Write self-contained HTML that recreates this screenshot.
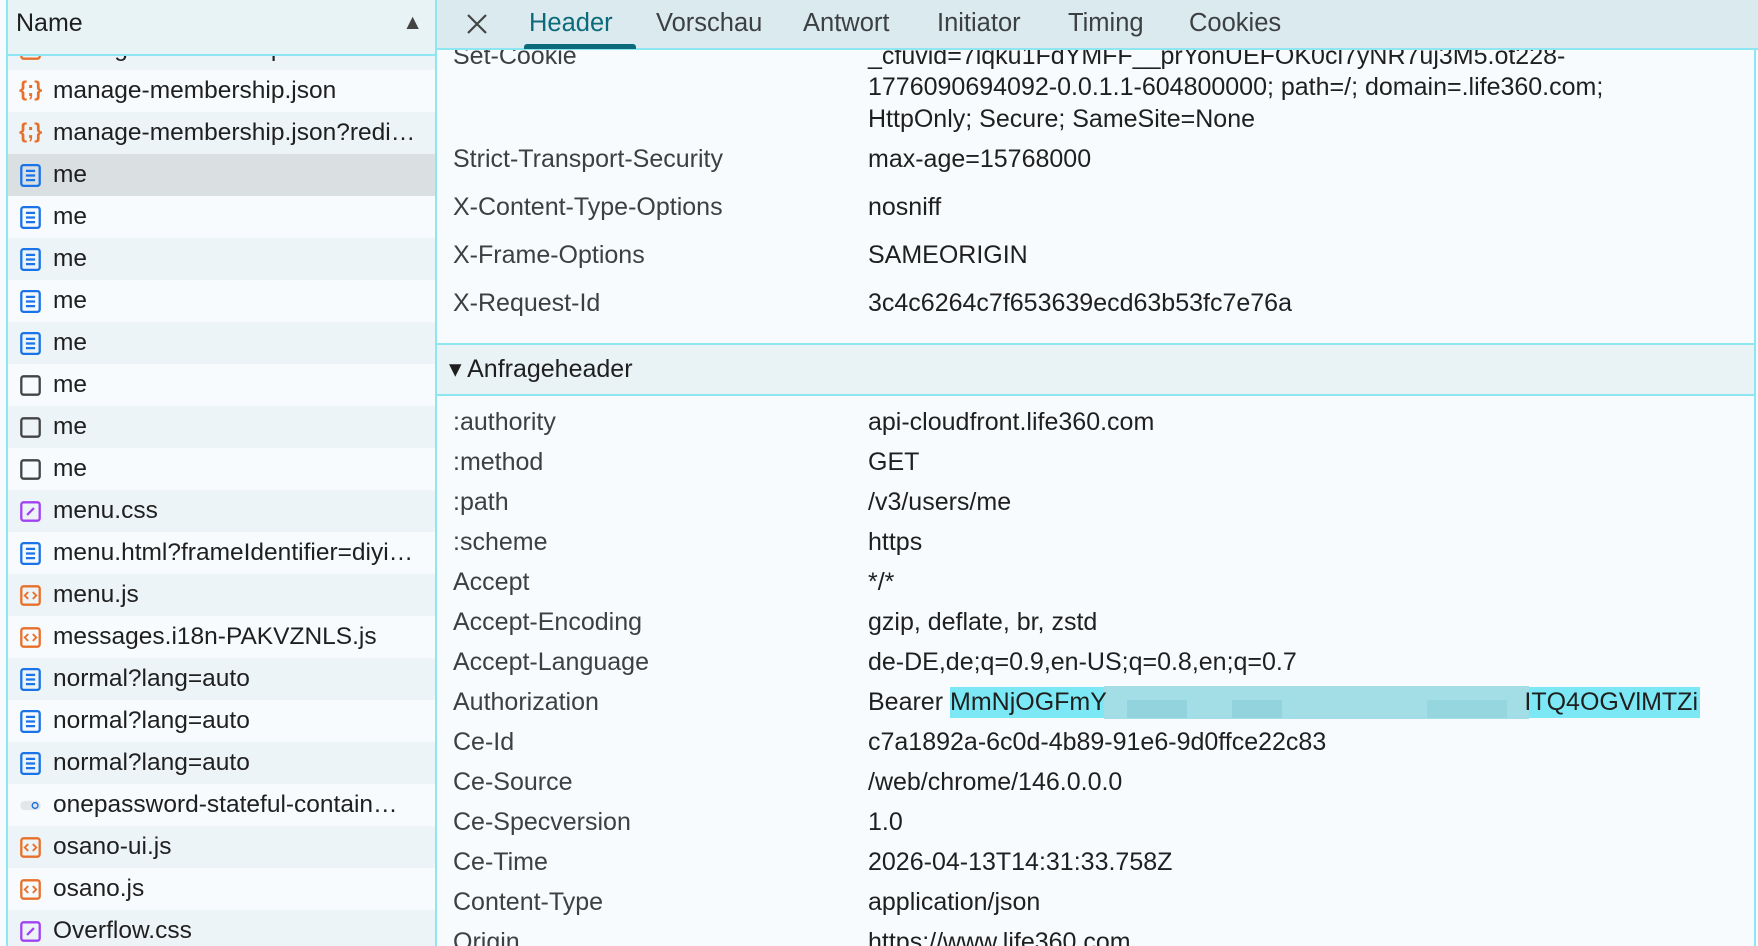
<!DOCTYPE html>
<html><head><meta charset="utf-8"><style>
*{margin:0;padding:0;box-sizing:border-box}
body{width:1758px;height:946px;overflow:hidden;background:#f7fbfd;font-family:"Liberation Sans",sans-serif;position:relative;color:#1f1f1f}
.lp{position:absolute;left:6px;top:0;width:431px;height:946px;border-left:2px solid #8ee6f2;border-right:2px solid #8ee6f2;overflow:hidden;background:#f7fbfd}
.row{position:absolute;left:0;width:100%;height:42px;font-size:24.5px;line-height:42px;padding-left:45px;white-space:nowrap}
.row.d{background:#edf4f7}
.row.sel{background:#dadfe2}
.ic{position:absolute;left:11px;top:10px;width:23px;height:23px}
.lh{position:absolute;left:0;top:0;width:100%;height:56px;background:#e8f3f6;border-bottom:2px solid #8ee6f2;font-size:25px;line-height:46px;padding-left:8px}
.rh{position:absolute;left:437px;top:0;width:1321px;height:50px;background:#dbeaef;border-bottom:2px solid #8ee6f2}
.tab{position:absolute;top:9px;font-size:25.5px;color:#3c4043}
.rp{position:absolute;left:437px;top:50px;width:1319px;height:896px;border-right:2px solid #8ee6f2;overflow:hidden}
.k{position:absolute;left:16px;font-size:25px;line-height:28px;color:#3c4043;white-space:nowrap}
.v{position:absolute;left:431px;font-size:25px;line-height:28px;color:#1f1f1f;white-space:nowrap}
</style></head><body>
<div class="lp">
<div class="row d" style="top:28px"><svg class="ic" viewBox="0 0 20 20"><rect x="2" y="2" width="16" height="16" rx="2" fill="none" stroke="#e8702a" stroke-width="2"/></svg>manage-membership-1077cc0…</div>
<div class="row" style="top:70px"><span class="ic" style="color:#e8702a;font-size:21px;line-height:22px;font-weight:bold;top:9px">{;}</span>manage-membership.json</div>
<div class="row d" style="top:112px"><span class="ic" style="color:#e8702a;font-size:21px;line-height:22px;font-weight:bold;top:9px">{;}</span>manage-membership.json?redi…</div>
<div class="row sel" style="top:154px"><svg class="ic" viewBox="0 0 20 20"><rect x="2" y="1" width="16" height="18" rx="2" fill="none" stroke="#1a73e8" stroke-width="2"/><path d="M6 6h8M6 10h8M6 14h8" stroke="#1a73e8" stroke-width="2"/></svg>me</div>
<div class="row" style="top:196px"><svg class="ic" viewBox="0 0 20 20"><rect x="2" y="1" width="16" height="18" rx="2" fill="none" stroke="#1a73e8" stroke-width="2"/><path d="M6 6h8M6 10h8M6 14h8" stroke="#1a73e8" stroke-width="2"/></svg>me</div>
<div class="row d" style="top:238px"><svg class="ic" viewBox="0 0 20 20"><rect x="2" y="1" width="16" height="18" rx="2" fill="none" stroke="#1a73e8" stroke-width="2"/><path d="M6 6h8M6 10h8M6 14h8" stroke="#1a73e8" stroke-width="2"/></svg>me</div>
<div class="row" style="top:280px"><svg class="ic" viewBox="0 0 20 20"><rect x="2" y="1" width="16" height="18" rx="2" fill="none" stroke="#1a73e8" stroke-width="2"/><path d="M6 6h8M6 10h8M6 14h8" stroke="#1a73e8" stroke-width="2"/></svg>me</div>
<div class="row d" style="top:322px"><svg class="ic" viewBox="0 0 20 20"><rect x="2" y="1" width="16" height="18" rx="2" fill="none" stroke="#1a73e8" stroke-width="2"/><path d="M6 6h8M6 10h8M6 14h8" stroke="#1a73e8" stroke-width="2"/></svg>me</div>
<div class="row" style="top:364px"><svg class="ic" viewBox="0 0 20 20"><rect x="2" y="2" width="16" height="16" rx="2" fill="none" stroke="#444" stroke-width="2"/></svg>me</div>
<div class="row d" style="top:406px"><svg class="ic" viewBox="0 0 20 20"><rect x="2" y="2" width="16" height="16" rx="2" fill="none" stroke="#444" stroke-width="2"/></svg>me</div>
<div class="row" style="top:448px"><svg class="ic" viewBox="0 0 20 20"><rect x="2" y="2" width="16" height="16" rx="2" fill="none" stroke="#444" stroke-width="2"/></svg>me</div>
<div class="row d" style="top:490px"><svg class="ic" viewBox="0 0 20 20"><rect x="2" y="2" width="16" height="16" rx="2" fill="none" stroke="#a142f4" stroke-width="2"/><path d="M7 13l6-6" stroke="#a142f4" stroke-width="2"/></svg>menu.css</div>
<div class="row" style="top:532px"><svg class="ic" viewBox="0 0 20 20"><rect x="2" y="1" width="16" height="18" rx="2" fill="none" stroke="#1a73e8" stroke-width="2"/><path d="M6 6h8M6 10h8M6 14h8" stroke="#1a73e8" stroke-width="2"/></svg>menu.html?frameIdentifier=diyi…</div>
<div class="row d" style="top:574px"><svg class="ic" viewBox="0 0 20 20"><rect x="2" y="2" width="16" height="16" rx="2" fill="none" stroke="#e8702a" stroke-width="2"/><path d="M8 7l-3 3 3 3M12 7l3 3-3 3" fill="none" stroke="#e8702a" stroke-width="1.6"/></svg>menu.js</div>
<div class="row" style="top:616px"><svg class="ic" viewBox="0 0 20 20"><rect x="2" y="2" width="16" height="16" rx="2" fill="none" stroke="#e8702a" stroke-width="2"/><path d="M8 7l-3 3 3 3M12 7l3 3-3 3" fill="none" stroke="#e8702a" stroke-width="1.6"/></svg>messages.i18n-PAKVZNLS.js</div>
<div class="row d" style="top:658px"><svg class="ic" viewBox="0 0 20 20"><rect x="2" y="1" width="16" height="18" rx="2" fill="none" stroke="#1a73e8" stroke-width="2"/><path d="M6 6h8M6 10h8M6 14h8" stroke="#1a73e8" stroke-width="2"/></svg>normal?lang=auto</div>
<div class="row" style="top:700px"><svg class="ic" viewBox="0 0 20 20"><rect x="2" y="1" width="16" height="18" rx="2" fill="none" stroke="#1a73e8" stroke-width="2"/><path d="M6 6h8M6 10h8M6 14h8" stroke="#1a73e8" stroke-width="2"/></svg>normal?lang=auto</div>
<div class="row d" style="top:742px"><svg class="ic" viewBox="0 0 20 20"><rect x="2" y="1" width="16" height="18" rx="2" fill="none" stroke="#1a73e8" stroke-width="2"/><path d="M6 6h8M6 10h8M6 14h8" stroke="#1a73e8" stroke-width="2"/></svg>normal?lang=auto</div>
<div class="row" style="top:784px"><svg class="ic" viewBox="0 0 20 20"><rect x="1" y="6" width="18" height="8" rx="4" fill="#e3e7ea"/><circle cx="14" cy="10" r="2.5" fill="none" stroke="#1a73e8" stroke-width="1.2"/></svg>onepassword-stateful-contain…</div>
<div class="row d" style="top:826px"><svg class="ic" viewBox="0 0 20 20"><rect x="2" y="2" width="16" height="16" rx="2" fill="none" stroke="#e8702a" stroke-width="2"/><path d="M8 7l-3 3 3 3M12 7l3 3-3 3" fill="none" stroke="#e8702a" stroke-width="1.6"/></svg>osano-ui.js</div>
<div class="row" style="top:868px"><svg class="ic" viewBox="0 0 20 20"><rect x="2" y="2" width="16" height="16" rx="2" fill="none" stroke="#e8702a" stroke-width="2"/><path d="M8 7l-3 3 3 3M12 7l3 3-3 3" fill="none" stroke="#e8702a" stroke-width="1.6"/></svg>osano.js</div>
<div class="row d" style="top:910px"><svg class="ic" viewBox="0 0 20 20"><rect x="2" y="2" width="16" height="16" rx="2" fill="none" stroke="#a142f4" stroke-width="2"/><path d="M7 13l6-6" stroke="#a142f4" stroke-width="2"/></svg>Overflow.css</div>
<div class="lh">Name<span style="position:absolute;right:12px;top:0;font-size:21px;color:#444">▲</span></div>
</div>

<div class="rp">
<div class="k" style="top:-8px">Set-Cookie</div>
<div class="v" style="top:-8px">_cfuvid=7lqku1FdYMFF__prYonUEFOK0cl7yNR7uj3M5.ot228-</div>
<div class="v" style="top:23px">1776090694092-0.0.1.1-604800000; path=/; domain=.life360.com;</div>
<div class="v" style="top:55px">HttpOnly; Secure; SameSite=None</div>
<div class="k" style="top:95px">Strict-Transport-Security</div><div class="v" style="top:95px">max-age=15768000</div>
<div class="k" style="top:143px">X-Content-Type-Options</div><div class="v" style="top:143px">nosniff</div>
<div class="k" style="top:191px">X-Frame-Options</div><div class="v" style="top:191px">SAMEORIGIN</div>
<div class="k" style="top:239px">X-Request-Id</div><div class="v" style="top:239px">3c4c6264c7f653639ecd63b53fc7e76a</div>
<div style="position:absolute;left:0;top:293px;width:100%;height:53px;background:#e9f2f5;border-top:2px solid #8ee6f2;border-bottom:2px solid #8ee6f2;font-size:25px;line-height:48px;padding-left:12px;color:#1f1f1f">▾ Anfrageheader</div>
<div class="k" style="top:358px">:authority</div><div class="v" style="top:358px">api-cloudfront.life360.com</div>
<div class="k" style="top:398px">:method</div><div class="v" style="top:398px">GET</div>
<div class="k" style="top:438px">:path</div><div class="v" style="top:438px">/v3/users/me</div>
<div class="k" style="top:478px">:scheme</div><div class="v" style="top:478px">https</div>
<div class="k" style="top:518px">Accept</div><div class="v" style="top:518px">*/*</div>
<div class="k" style="top:558px">Accept-Encoding</div><div class="v" style="top:558px">gzip, deflate, br, zstd</div>
<div class="k" style="top:598px">Accept-Language</div><div class="v" style="top:598px">de-DE,de;q=0.9,en-US;q=0.8,en;q=0.7</div>
<div style="position:absolute;left:513px;top:637px;width:750px;height:31px;background:#7ce8f5"></div>
<div style="position:absolute;left:667px;top:636px;width:425px;height:33px;background:#a3dde6"></div>
<div style="position:absolute;left:690px;top:650px;width:60px;height:18px;background:#93d3dd"></div>
<div style="position:absolute;left:795px;top:650px;width:50px;height:18px;background:#93d3dd"></div>
<div style="position:absolute;left:990px;top:650px;width:80px;height:18px;background:#96d6df"></div>
<div class="k" style="top:638px">Authorization</div><div class="v" style="top:638px">Bearer</div>
<div class="v" style="top:638px;left:513px">MmNjOGFmY</div>
<div class="v" style="top:638px;left:auto;right:56px">ITQ4OGVlMTZi</div>
<div class="k" style="top:678px">Ce-Id</div><div class="v" style="top:678px">c7a1892a-6c0d-4b89-91e6-9d0ffce22c83</div>
<div class="k" style="top:718px">Ce-Source</div><div class="v" style="top:718px">/web/chrome/146.0.0.0</div>
<div class="k" style="top:758px">Ce-Specversion</div><div class="v" style="top:758px">1.0</div>
<div class="k" style="top:798px">Ce-Time</div><div class="v" style="top:798px">2026-04-13T14:31:33.758Z</div>
<div class="k" style="top:838px">Content-Type</div><div class="v" style="top:838px">application/json</div>
<div class="k" style="top:878px">Origin</div><div class="v" style="top:878px">https://www.life360.com</div>
</div>

<div class="rh">
<svg style="position:absolute;left:29px;top:13px" width="22" height="22" viewBox="0 0 22 22"><path d="M2 2l18 18M20 2L2 20" stroke="#444" stroke-width="2.2"/></svg>
<div class="tab" style="left:92px;color:#0b6b7a">Header</div>
<div style="position:absolute;left:87px;top:44px;width:112px;height:5px;background:#0b6b7a;border-radius:3px 3px 0 0"></div>
<div class="tab" style="left:219px">Vorschau</div>
<div class="tab" style="left:366px">Antwort</div>
<div class="tab" style="left:500px">Initiator</div>
<div class="tab" style="left:631px">Timing</div>
<div class="tab" style="left:752px">Cookies</div>
</div>
</body></html>
